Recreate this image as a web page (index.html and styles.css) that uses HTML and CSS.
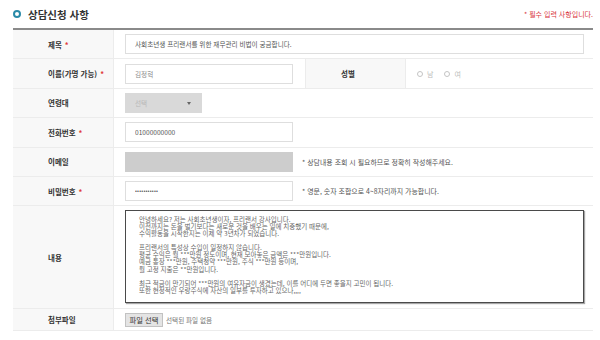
FILE: index.html
```html
<!DOCTYPE html>
<html lang="ko">
<head>
    <meta charset="UTF-8">
    <meta name="viewport" content="width=device-width, initial-scale=1.0">
    <title>상담신청 사항</title>
    <link rel="stylesheet" href="styles.css">
</head>
<body>
    <div class="wrap">
        <div class="head">
            <h2 class="title"><span class="dot"></span>상담신청 사항</h2>
            <p class="must">* 필수 입력 사항입니다.</p>
        </div>

        <div class="form-table">
            <div class="row">
                <div class="th">제목<span class="req">*</span></div>
                <div class="td"><input type="text" class="ipt full" spellcheck="false" value="사회초년생 프리랜서를 위한 재무관리 비법이 궁금합니다."></div>
            </div>
            <div class="row">
                <div class="th">이름(가명 가능)<span class="req">*</span></div>
                <div class="td half"><input type="text" class="ipt light" spellcheck="false" value="김정혁"></div>
                <div class="th mid">성별</div>
                <div class="td">
                    <label class="radio">남</label>
                    <label class="radio">여</label>
                </div>
            </div>
            <div class="row">
                <div class="th">연령대</div>
                <div class="td">
                    <span class="sel-wrap">
                        <select class="sel" disabled>
                            <option>선택</option>
                        </select>
                    </span>
                </div>
            </div>
            <div class="row">
                <div class="th">전화번호<span class="req">*</span></div>
                <div class="td"><input type="text" class="ipt" value="01000000000"></div>
            </div>
            <div class="row">
                <div class="th">이메일</div>
                <div class="td">
                    <input type="text" class="ipt gray" value="">
                    <span class="note">* 상담내용 조회 시 필요하므로 정확히 작성해주세요.</span>
                </div>
            </div>
            <div class="row">
                <div class="th">비밀번호<span class="req">*</span></div>
                <div class="td">
                    <input type="password" class="ipt pw" value="12345678901">
                    <span class="note">* 영문, 숫자 조합으로 4~8자리까지 가능합니다.</span>
                </div>
            </div>
            <div class="row tall">
                <div class="th">내용</div>
                <div class="td">
<textarea class="txt" spellcheck="false">안녕하세요? 저는 사회초년생이자, 프리랜서 강사입니다.
이전까지는 돈을 벌기보다는 새로운 것을 배우는 일에 치중했기 때문에,
수익활동을 시작한지는 이제 약 3년차가 되었습니다.

프리랜서의 특성상 수입이 일정하지 않습니다.
평균 수익은 월 ***만원 정도이며, 현재 모아놓은 금액은 ***만원입니다.
예금 통장 ***만원, 주택청약 ***만원, 주식 ***만원 등이며,
월 고정 지출은 **만원입니다.

최근 적금이 만기되어 ***만원의 여유자금이 생겼는데, 이를 어디에 두면 좋을지 고민이 됩니다.
또한 현정적인 우량주식에 자산의 일부를 투자하고 있으나,,,,</textarea>
                </div>
            </div>
            <div class="row file">
                <div class="th">첨부파일</div>
                <div class="td">
                    <label class="file-btn">파일 선택</label>
                    <span class="file-name">선택된 파일 없음</span>
                </div>
            </div>
        </div>
    </div>
</body>
</html>
```

FILE: styles.css
```css
body {
    margin: 0;
    font-family: "Noto Sans CJK KR", "Noto Sans", sans-serif;
    color: #333;
    background: #fff;
}
.wrap {
    padding: 0 7px 0 13px;
}
.head {
    display: flex;
    justify-content: space-between;
    align-items: center;
    height: 28px;
    border-bottom: 2px solid #8a8a8a;
}
.title {
    display: flex;
    align-items: center;
    margin: 0;
    font-size: 10.5px;
    font-weight: 700;
    color: #333;
}
.dot {
    width: 4px;
    height: 4px;
    border: 2px solid #2a8aa8;
    border-radius: 50%;
    margin-right: 7px;
}
.must {
    margin: 0;
    font-size: 7px;
    color: #d9363e;
}
.row {
    display: flex;
    height: 29.4px;
    box-sizing: border-box;
    border-bottom: 1px solid #ececec;
}
.row.tall {
    height: 103px;
}
.row.file {
    height: 22px;
}
.th {
    width: 101px;
    flex-shrink: 0;
    box-sizing: border-box;
    display: flex;
    align-items: center;
    padding-left: 35px;
    background: #f8f8f8;
    border-right: 1px solid #ececec;
    font-size: 7.5px;
    font-weight: 700;
    color: #333;
}
.th.mid {
    border-left: 1px solid #ececec;
}
.req {
    color: #e03a3a;
    margin-left: 3px;
}
.td {
    flex: 1;
    min-width: 0;
    display: flex;
    align-items: center;
    padding: 0 9px 0 11px;
}
.td.half {
    flex: 0 0 191px;
    box-sizing: border-box;
}
.ipt {
    width: 168px;
    height: 20px;
    box-sizing: border-box;
    padding: 0 9px;
    border: 1px solid #dedede;
    font-family: "Noto Sans CJK KR", "Noto Sans", sans-serif;
    font-size: 6.6px;
    color: #555;
    outline: none;
}
.ipt.full {
    width: 100%;
}
.ipt.light {
    color: #8a8a8a;
}
.ipt.gray {
    background: #cdcdcd;
    border-color: #cdcdcd;
}
.ipt.pw {
    font-size: 5.6px;
    letter-spacing: 0.2px;
    color: #555;
}
.note {
    margin-left: 9px;
    font-size: 6.95px;
    color: #555;
    white-space: nowrap;
}
.radio {
    display: inline-flex;
    align-items: center;
    margin-right: 11px;
    font-size: 7px;
    color: #bbb;
}
.radio::before {
    content: "";
    width: 4px;
    height: 4px;
    border: 1px solid #c4c4c4;
    border-radius: 50%;
    margin-right: 4px;
}
.sel-wrap {
    position: relative;
    display: inline-block;
}
.sel-wrap::after {
    content: "";
    position: absolute;
    right: 11px;
    top: 9px;
    border-left: 2px solid transparent;
    border-right: 2px solid transparent;
    border-top: 3px solid #666;
}
.sel {
    display: block;
    width: 77px;
    height: 20px;
    padding: 0 0 0 10px;
    appearance: none;
    -webkit-appearance: none;
    border: none;
    border-radius: 0;
    background: #d9d9d9;
    font-family: "Noto Sans CJK KR", "Noto Sans", sans-serif;
    font-size: 6.6px;
    color: #b8b8b8;
    opacity: 1;
}
.txt {
    width: 100%;
    height: 93px;
    box-sizing: border-box;
    margin-top: -2px;
    padding: 5px 13px;
    border: 1px solid #4a4a4a;
    box-shadow: 1px 1px 1px rgba(0, 0, 0, 0.35);
    resize: none;
    overflow: hidden;
    font-family: "Noto Sans CJK KR", "Noto Sans", sans-serif;
    font-size: 6.5px;
    line-height: 7.1px;
    color: #666;
    outline: none;
}
.file-btn {
    display: inline-flex;
    align-items: center;
    justify-content: center;
    width: 38px;
    height: 14px;
    box-sizing: border-box;
    background: #e4e4e4;
    border: 1px solid #c2c2c2;
    font-size: 7.3px;
    color: #333;
}
.file-name {
    margin-left: 3px;
    font-size: 6.6px;
    color: #777;
}
```
